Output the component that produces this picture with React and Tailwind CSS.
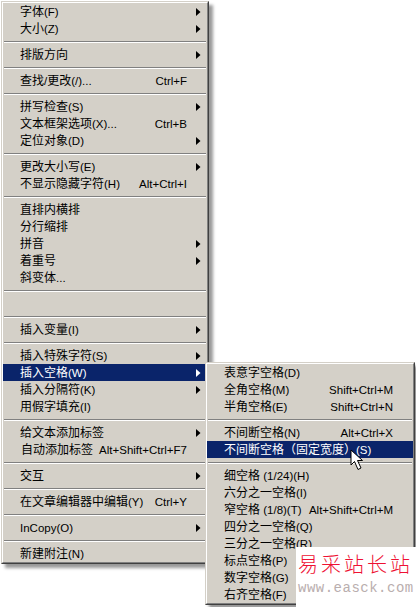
import React from "react";

const FONT = "font-['Liberation_Sans','Noto_Sans_CJK_SC',sans-serif]";

function Arrow({ white }) {
  return (
    <svg width="5" height="8" viewBox="0 0 5 8" className="ml-[9px] block">
      <polygon points="0,0 4.5,4 0,8" fill={white ? "#ffffff" : "#000000"} />
    </svg>
  );
}

function Mixed({ text }) {
  return text.split(/([\x00-\x7f]+)/).map((part, i) =>
    i % 2 === 1 ? <span key={i} className="text-[11.5px]">{part}</span> : part
  );
}

function Row({ label, keys, arrow, active, indent }) {
  return (
    <div className={`flex h-[17px] items-center whitespace-nowrap pl-[17px] leading-[17px] ${active ? "bg-[#0a246a] text-white" : "text-black"}`}>
      <span className={`flex-1 pt-px ${indent ? "pl-px" : ""}`}><Mixed text={label} /></span>
      {keys ? <span className="pt-px text-[11.5px]">{keys}</span> : null}
      <span className="flex w-[20px] items-center">{arrow ? <Arrow white={active} /> : null}</span>
    </div>
  );
}

function Sep() {
  return (
    <div className="px-px pb-[3px] pt-[4px]">
      <div className="h-px bg-[#808080]" />
      <div className="h-px bg-white" />
    </div>
  );
}

function Items({ items }) {
  return items.map((it, i) =>
    it === "-" ? <Sep key={i} /> : <Row key={i} {...it} />
  );
}

function Frame({ className, children }) {
  return (
    <div className={`border border-b-[#404040] border-l-[#d4d0c8] border-r-[#404040] border-t-[#d4d0c8] bg-[#d4d0c8] shadow-[4px_4px_3px_rgba(0,0,0,0.4)] ${className}`}>
      <div className="border border-b-[#808080] border-l-white border-r-[#808080] border-t-white">
        {children}
      </div>
    </div>
  );
}

const main = [
  { label: "字体(F)", arrow: true },
  { label: "大小(Z)", arrow: true },
  "-",
  { label: "排版方向", arrow: true },
  "-",
  { label: "查找/更改(/)...", keys: "Ctrl+F" },
  "-",
  { label: "拼写检查(S)", arrow: true },
  { label: "文本框架选项(X)...", keys: "Ctrl+B" },
  { label: "定位对象(D)", arrow: true },
  "-",
  { label: "更改大小写(E)", arrow: true },
  { label: "不显示隐藏字符(H)", keys: "Alt+Ctrl+I" },
  "-",
  { label: "直排内横排" },
  { label: "分行缩排" },
  { label: "拼音", arrow: true },
  { label: "着重号", arrow: true },
  { label: "斜变体..." },
  "-",
  { label: "" },
  "-",
  { label: "插入变量(I)", arrow: true },
  "-",
  { label: "插入特殊字符(S)", arrow: true },
  { label: "插入空格(W)", arrow: true, active: true },
  { label: "插入分隔符(K)", arrow: true },
  { label: "用假字填充(I)" },
  "-",
  { label: "给文本添加标签", arrow: true },
  { label: "自动添加标签", keys: "Alt+Shift+Ctrl+F7", indent: true },
  "-",
  { label: "交互", arrow: true },
  "-",
  { label: "在文章编辑器中编辑(Y)", keys: "Ctrl+Y" },
  "-",
  { label: "InCopy(O)", arrow: true },
  "-",
  { label: "新建附注(N)" },
];

const sub = [
  { label: "表意字空格(D)" },
  { label: "全角空格(M)", keys: "Shift+Ctrl+M" },
  { label: "半角空格(E)", keys: "Shift+Ctrl+N" },
  "-",
  { label: "不间断空格(N)", keys: "Alt+Ctrl+X" },
  { label: "不间断空格（固定宽度）(S)", active: true },
  "-",
  { label: "细空格 (1/24)(H)" },
  { label: "六分之一空格(I)" },
  { label: "窄空格 (1/8)(T)", keys: "Alt+Shift+Ctrl+M" },
  { label: "四分之一空格(Q)" },
  { label: "三分之一空格(R)" },
  { label: "标点空格(P)" },
  { label: "数字空格(G)" },
  { label: "右齐空格(F)" },
];

export default function App() {
  return (
    <div className={`relative h-[607px] w-[416px] overflow-hidden bg-white pl-px pt-px text-[12px] ${FONT}`}>
      <Frame className="w-[208px]">
        <Items items={main} />
      </Frame>

      <Frame className="absolute left-[205px] top-[362px] w-[210px]">
        <Items items={sub} />
      </Frame>

      <svg width="16" height="24" viewBox="0 0 16 24" className="absolute left-[350px] top-[449px]">
        <path d="M1 1 L1 16 L4.5 12.5 L8 20.5 L11 19 L7.5 11.5 L12.5 11.5 Z" fill="#ffffff" stroke="#000000" strokeWidth="1" />
      </svg>

      <div className="absolute left-[296px] top-[547px] h-[60px] w-[120px] bg-white pl-[2px] pt-[3px]">
        <div className="whitespace-nowrap font-['Noto_Sans_CJK_SC',sans-serif] text-[20px] font-light leading-[28px] tracking-[3px] text-[#ee1133]">易采站长站</div>
        <div className="mt-[2px] whitespace-nowrap font-['Liberation_Mono',monospace] text-[14px] leading-[16px] tracking-[0.5px] text-[#b9aeae]">www.easck.com</div>
      </div>
    </div>
  );
}
